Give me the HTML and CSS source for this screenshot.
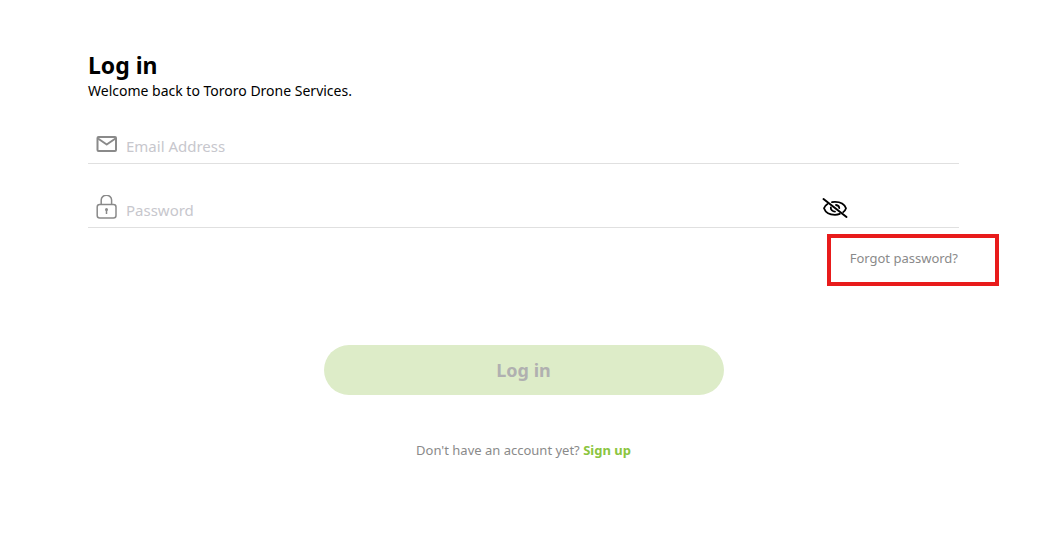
FILE: index.html
```html
<!DOCTYPE html>
<html lang="en">
<head>
    <meta charset="UTF-8">
    <meta name="viewport" content="width=device-width, initial-scale=1.0">
    <title>Log in</title>
    <link rel="stylesheet" href="styles.css">
</head>
<body>

    <form class="login">
        <h1>Log in</h1>
        <p class="welcome">Welcome back to Tororo Drone Services.</p>

        <div class="field">
            <label for="email" aria-label="Email Address">
                <svg width="22" height="26" viewBox="0 0 22 26" fill="none" stroke="#8a8a8a" stroke-width="2" stroke-linejoin="round">
                    <rect x="1.500" y="6" width="18.500" height="14" rx="1"/>
                    <path d="M2 7.500 10.700 13.500l8.800-6"/>
                </svg>
            </label>
            <input type="email" id="email" placeholder="Email Address">
        </div>

        <div class="field">
            <label for="password" aria-label="Password">
                <svg width="22" height="26" viewBox="0 0 22 26" fill="none" stroke="#8a8a8a" stroke-width="1.500">
                    <rect x="1.200" y="9.500" width="18.800" height="13.500" rx="2.500"/>
                    <path d="M5.200 9.500V5a5.200 4.800 0 0 1 10.400 0v4.500"/>
                    <path d="M10.500 14.500v4.500"/>
                    <circle cx="10.500" cy="14.500" r="1.500" fill="#8a8a8a" stroke="none"/>
                </svg>
            </label>
            <input type="password" id="password" placeholder="Password">
            <button type="button" class="toggle" aria-label="Show password">
                <svg width="26" height="22" viewBox="0 0 26 22" fill="none" stroke="#000" stroke-width="1.800" stroke-linecap="round">
                    <path d="M1.500 2l23 18" stroke-width="2"/>
                    <path d="M5.500 7C3.500 8.200 2.500 9.500 2 11.300c1.500 4.300 6 6.500 11 6.500 1.800 0 3.400-.3 4.800-.9"/>
                    <path d="M10 5.200c1.100-.3 2-.4 3-.4 5 0 9.500 2.300 11 6.400-.5 1.600-1.500 2.900-2.800 3.900"/>
                    <path d="M8.800 10.500c-.2 2.300 1.800 4.100 4.200 4.100"/>
                    <path d="M14 8c1.900.3 3.200 1.500 3.300 3"/>
                </svg>
            </button>
        </div>

        <a href="#" class="forgot">Forgot password?</a>

        <button type="submit" class="submit" disabled>Log in</button>

        <p class="signup">Don't have an account yet? <a href="#">Sign up</a></p>
    </form>

</body>
</html>
```

FILE: styles.css
```css
* {
    box-sizing: border-box;
}
body {
    margin: 0;
    background: white;
    color: #000;
    font-family: "Segoe UI", "Noto Sans", "Open Sans", sans-serif;
}
.login {
    display: flex;
    flex-direction: column;
    margin: 0 78px 0 88px;
    padding: 49px 0 40px;
}
h1 {
    margin: 0;
    font-size: 23px;
    line-height: 32px;
}
.welcome {
    margin: 0 0 17px;
    font-size: 14px;
    line-height: 20px;
}
.field {
    display: flex;
    align-items: center;
    height: 46px;
    margin-bottom: 18px;
    padding: 6px 111px 0 8px;
    border-bottom: 1px solid #e0e0e0;
}
.field label {
    display: flex;
    padding-right: 8px;
}
.field input {
    flex: 1;
    min-width: 0;
    padding: 4px 0 0;
    border: none;
    outline: none;
    background: none;
    font-family: inherit;
    font-size: 15px;
}
.field input::placeholder {
    color: #c7c7cd;
    opacity: 1;
}
.toggle {
    display: flex;
    padding: 0;
    border: none;
    background: none;
    cursor: pointer;
}
.forgot {
    align-self: flex-end;
    margin: -12px -40px 0 0;
    padding: 10px 37px 14px 19px;
    border: 4px solid #e81b1b;
    color: #8a8a8a;
    font-size: 13px;
    line-height: 20px;
    text-decoration: none;
}
.submit {
    align-self: center;
    width: 400px;
    max-width: 100%;
    height: 50px;
    margin: 59px 0 45px;
    border: none;
    border-radius: 25px;
    background: #ddecc8;
    color: #b0b0b0;
    font-family: inherit;
    font-size: 18px;
    font-weight: bold;
}
.signup {
    margin: 0;
    color: #8a8a8a;
    font-size: 13px;
    line-height: 20px;
    text-align: center;
}
.signup a {
    color: #8bc53f;
    font-weight: bold;
    text-decoration: none;
}
```
